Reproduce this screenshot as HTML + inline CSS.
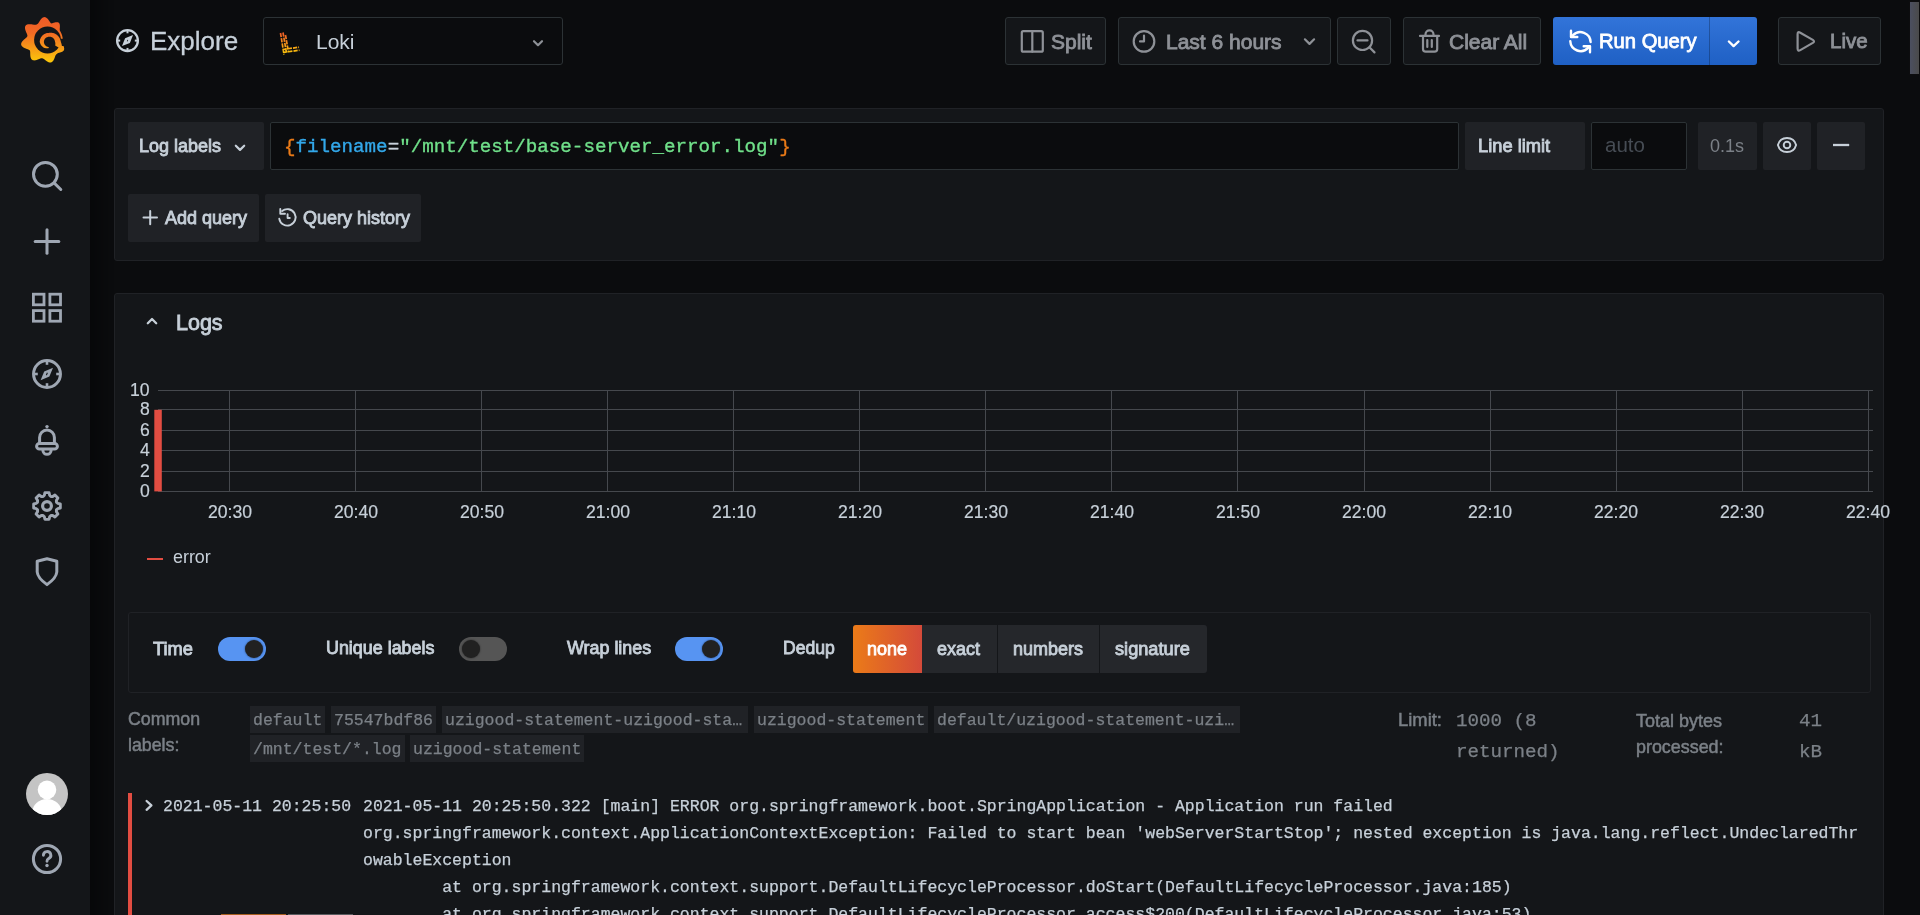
<!DOCTYPE html><html><head><meta charset="utf-8"><style>
*{margin:0;padding:0;box-sizing:border-box}
html,body{width:1920px;height:915px;overflow:hidden;background:#0b0c0e;font-family:"Liberation Sans", sans-serif;color:#c7d0d9}
.a{position:absolute}
.t{position:absolute;white-space:pre;line-height:1}
.m{font-family:"Liberation Mono", monospace}
.med{-webkit-text-stroke:0.85px currentColor}
.m{-webkit-text-stroke:0.25px currentColor}
body>*{will-change:transform}
svg{position:absolute;overflow:visible}
</style></head><body><div class="a" style="left:0;top:0;width:90px;height:915px;background:#141619"></div>
<div class="a" style="left:90px;top:0;width:24px;height:915px;background:linear-gradient(to right,rgba(0,0,0,0.35),rgba(0,0,0,0))"></div>
<svg class="a" style="left:0;top:0" width="90" height="90" viewBox="0 0 90 90">
<defs><linearGradient id="lg" x1="0" y1="17" x2="0" y2="63" gradientUnits="userSpaceOnUse"><stop offset="0" stop-color="#f05a28"/><stop offset="0.35" stop-color="#f26a24"/><stop offset="1" stop-color="#fbca0a"/></linearGradient></defs>
<path d="M44.80,17.13 L45.00,17.16 L45.21,17.21 L45.41,17.27 L45.61,17.35 L45.81,17.43 L46.00,17.53 L46.20,17.64 L46.39,17.76 L46.58,17.89 L46.77,18.03 L46.95,18.18 L47.13,18.33 L47.31,18.49 L47.48,18.66 L47.65,18.84 L47.82,19.02 L47.98,19.20 L48.14,19.39 L48.30,19.59 L48.45,19.78 L48.60,19.98 L48.75,20.18 L48.89,20.38 L49.03,20.58 L49.17,20.78 L49.31,20.98 L49.44,21.18 L49.57,21.38 L49.70,21.57 L49.82,21.76 L49.94,21.95 L50.07,22.13 L50.19,22.31 L50.31,22.48 L50.43,22.65 L50.55,22.81 L50.67,22.96 L50.79,23.10 L50.91,23.24 L51.04,23.37 L51.17,23.45 L51.35,23.43 L51.53,23.41 L51.72,23.37 L51.92,23.32 L52.11,23.27 L52.32,23.21 L52.53,23.15 L52.74,23.08 L52.95,23.01 L53.18,22.94 L53.40,22.87 L53.63,22.79 L53.86,22.72 L54.09,22.65 L54.33,22.58 L54.57,22.51 L54.81,22.44 L55.05,22.38 L55.29,22.33 L55.53,22.28 L55.77,22.24 L56.01,22.20 L56.25,22.18 L56.49,22.16 L56.72,22.15 L56.95,22.15 L57.17,22.16 L57.39,22.18 L57.60,22.22 L57.81,22.26 L58.01,22.32 L58.20,22.39 L58.38,22.48 L58.55,22.58 L58.71,22.69 L58.86,22.82 L59.00,22.96 L59.13,23.12 L59.24,23.29 L59.35,23.47 L59.44,23.65 L59.53,23.85 L59.60,24.06 L59.67,24.28 L59.72,24.50 L59.77,24.72 L59.81,24.96 L59.84,25.19 L59.86,25.44 L59.88,25.68 L59.89,25.93 L59.90,26.17 L59.90,26.42 L59.89,26.67 L59.89,26.92 L59.87,27.16 L59.86,27.41 L59.85,27.65 L59.83,27.89 L59.81,28.12 L59.80,28.36 L59.78,28.58 L59.77,28.81 L59.76,29.02 L59.75,29.23 L59.75,29.44 L59.75,29.64 L59.76,29.83 L59.77,30.02 L59.80,30.19 L59.83,30.36 L59.87,30.52 L59.92,30.68 L59.99,30.82 L60.06,30.96 L60.15,31.10 L60.23,31.23 L60.31,31.36 L60.39,31.50 L60.47,31.64 L60.54,31.77 L60.62,31.91 L60.69,32.05 L60.77,32.19 L60.84,32.33 L60.91,32.47 L60.98,32.61 L61.05,32.75 L61.11,32.89 L61.18,33.04 L61.24,33.18 L61.31,33.32 L61.37,33.47 L61.43,33.61 L61.49,33.76 L61.55,33.90 L61.60,34.05 L61.66,34.20 L61.71,34.34 L61.77,34.49 L61.82,34.64 L61.87,34.79 L61.92,34.94 L61.97,35.09 L62.01,35.24 L62.06,35.39 L62.10,35.54 L62.15,35.69 L62.19,35.84 L62.23,35.99 L62.27,36.15 L62.30,36.30 L62.34,36.45 L62.37,36.60 L62.41,36.76 L62.44,36.91 L62.47,37.07 L62.50,37.22 L62.53,37.37 L62.55,37.53 L62.58,37.68 L62.60,37.84 L62.62,37.99 L62.65,38.15 L62.67,38.31 L62.68,38.46 L62.70,38.62 L62.72,38.77 L62.73,38.93 L62.74,39.09 L62.76,39.24 L62.77,39.40 L62.78,39.56 L62.78,39.71 L62.79,39.87 L62.79,40.03 L62.80,40.19 L62.80,40.34 L62.80,40.50 L62.80,40.66 L62.80,40.81 L62.79,40.97 L62.79,41.13 L62.78,41.29 L62.78,41.44 L62.77,41.60 L62.76,41.76 L62.74,41.91 L62.73,42.07 L62.72,42.23 L62.70,42.38 L62.68,42.54 L62.67,42.69 L62.65,42.85 L62.65,43.01 L62.66,43.17 L62.67,43.33 L62.70,43.49 L62.73,43.66 L62.77,43.83 L62.82,44.00 L62.87,44.18 L62.93,44.35 L62.99,44.53 L63.05,44.71 L63.12,44.90 L63.19,45.09 L63.27,45.28 L63.34,45.47 L63.42,45.66 L63.49,45.86 L63.57,46.06 L63.64,46.26 L63.71,46.46 L63.78,46.67 L63.84,46.87 L63.90,47.08 L63.96,47.28 L64.01,47.49 L64.05,47.70 L64.09,47.91 L64.12,48.11 L64.15,48.32 L64.17,48.52 L64.17,48.72 L64.17,48.92 L64.16,49.12 L64.14,49.31 L64.11,49.50 L64.07,49.69 L64.01,49.87 L63.95,50.05 L63.87,50.22 L63.78,50.38 L63.67,50.54 L63.56,50.69 L63.43,50.83 L63.30,50.97 L63.15,51.10 L63.00,51.22 L62.84,51.34 L62.67,51.45 L62.50,51.56 L62.32,51.66 L62.13,51.76 L61.94,51.85 L61.75,51.93 L61.55,52.01 L61.35,52.09 L61.15,52.16 L60.94,52.23 L60.74,52.29 L60.53,52.36 L60.33,52.42 L60.12,52.47 L59.92,52.53 L59.72,52.58 L59.52,52.63 L59.32,52.69 L59.13,52.74 L58.94,52.79 L58.75,52.84 L58.57,52.90 L58.39,52.96 L58.22,53.02 L58.06,53.08 L57.90,53.15 L57.74,53.22 L57.60,53.30 L57.45,53.38 L57.32,53.47 L57.19,53.56 L57.08,53.66 L56.96,53.77 L56.84,53.88 L56.73,53.98 L56.61,54.08 L56.49,54.19 L56.37,54.29 L56.25,54.39 L56.14,54.51 L56.04,54.63 L55.94,54.76 L55.85,54.90 L55.76,55.04 L55.67,55.19 L55.59,55.35 L55.51,55.51 L55.43,55.69 L55.36,55.86 L55.28,56.04 L55.21,56.23 L55.14,56.42 L55.07,56.62 L55.00,56.82 L54.93,57.02 L54.85,57.23 L54.78,57.44 L54.70,57.65 L54.63,57.87 L54.55,58.08 L54.46,58.30 L54.38,58.51 L54.29,58.73 L54.20,58.94 L54.10,59.16 L54.00,59.37 L53.90,59.58 L53.79,59.79 L53.68,59.99 L53.57,60.19 L53.45,60.39 L53.32,60.58 L53.19,60.76 L53.06,60.94 L52.92,61.12 L52.78,61.28 L52.63,61.44 L52.48,61.59 L52.32,61.73 L52.16,61.86 L51.99,61.98 L51.82,62.09 L51.64,62.19 L51.46,62.28 L51.27,62.36 L51.08,62.42 L50.89,62.46 L50.69,62.50 L50.50,62.52 L50.29,62.53 L50.09,62.53 L49.88,62.51 L49.67,62.49 L49.47,62.45 L49.26,62.41 L49.05,62.35 L48.84,62.29 L48.63,62.22 L48.42,62.13 L48.21,62.04 L48.01,61.95 L47.80,61.85 L47.60,61.74 L47.39,61.62 L47.19,61.50 L46.99,61.38 L46.80,61.25 L46.60,61.12 L46.41,60.99 L46.22,60.85 L46.04,60.71 L45.85,60.57 L45.67,60.43 L45.49,60.29 L45.31,60.15 L45.14,60.02 L44.97,59.88 L44.80,59.74 L44.63,59.61 L44.47,59.48 L44.31,59.36 L44.15,59.24 L43.99,59.12 L43.83,59.01 L43.67,58.91 L43.52,58.81 L43.37,58.72 L43.21,58.64 L43.06,58.56 L42.91,58.50 L42.76,58.44 L42.60,58.39 L42.45,58.35 L42.29,58.32 L42.14,58.30 L41.98,58.28 L41.83,58.26 L41.67,58.25 L41.51,58.25 L41.35,58.27 L41.18,58.29 L41.01,58.32 L40.84,58.36 L40.67,58.41 L40.49,58.46 L40.31,58.52 L40.12,58.59 L39.94,58.66 L39.74,58.73 L39.55,58.81 L39.35,58.89 L39.15,58.98 L38.95,59.07 L38.74,59.15 L38.53,59.24 L38.32,59.33 L38.10,59.42 L37.88,59.51 L37.66,59.60 L37.44,59.69 L37.21,59.77 L36.98,59.85 L36.75,59.93 L36.52,60.00 L36.29,60.07 L36.06,60.13 L35.83,60.19 L35.60,60.24 L35.36,60.28 L35.13,60.32 L34.90,60.35 L34.67,60.37 L34.45,60.39 L34.22,60.39 L34.00,60.39 L33.78,60.37 L33.57,60.35 L33.36,60.32 L33.15,60.27 L32.95,60.21 L32.76,60.15 L32.57,60.07 L32.39,59.98 L32.22,59.87 L32.05,59.76 L31.90,59.63 L31.75,59.49 L31.61,59.34 L31.48,59.18 L31.35,59.01 L31.23,58.83 L31.13,58.65 L31.02,58.45 L30.93,58.25 L30.84,58.05 L30.76,57.83 L30.69,57.61 L30.63,57.39 L30.57,57.17 L30.51,56.94 L30.46,56.70 L30.42,56.47 L30.39,56.23 L30.35,55.99 L30.33,55.75 L30.30,55.51 L30.28,55.27 L30.27,55.03 L30.26,54.79 L30.25,54.55 L30.24,54.32 L30.23,54.08 L30.23,53.85 L30.22,53.62 L30.22,53.40 L30.22,53.18 L30.21,52.96 L30.21,52.74 L30.20,52.53 L30.19,52.33 L30.18,52.13 L30.17,51.93 L30.15,51.74 L30.12,51.56 L30.09,51.38 L30.06,51.21 L30.02,51.04 L29.97,50.88 L29.92,50.73 L29.86,50.58 L29.78,50.44 L29.68,50.32 L29.56,50.21 L29.44,50.10 L29.30,50.00 L29.15,49.90 L28.99,49.81 L28.83,49.72 L28.65,49.64 L28.47,49.55 L28.28,49.47 L28.08,49.39 L27.87,49.31 L27.66,49.23 L27.45,49.15 L27.22,49.07 L27.00,48.99 L26.77,48.91 L26.53,48.83 L26.29,48.74 L26.05,48.65 L25.81,48.56 L25.57,48.46 L25.33,48.37 L25.09,48.27 L24.85,48.16 L24.61,48.05 L24.37,47.94 L24.13,47.82 L23.90,47.70 L23.68,47.57 L23.45,47.44 L23.24,47.30 L23.03,47.16 L22.83,47.01 L22.63,46.86 L22.44,46.70 L22.27,46.54 L22.10,46.37 L21.94,46.20 L21.80,46.02 L21.67,45.84 L21.55,45.66 L21.44,45.47 L21.35,45.27 L21.27,45.07 L21.21,44.87 L21.16,44.67 L21.14,44.46 L21.13,44.25 L21.13,44.04 L21.15,43.82 L21.19,43.61 L21.23,43.39 L21.30,43.18 L21.37,42.96 L21.46,42.75 L21.56,42.53 L21.67,42.32 L21.79,42.11 L21.92,41.90 L22.06,41.69 L22.21,41.49 L22.37,41.28 L22.53,41.08 L22.70,40.89 L22.88,40.69 L23.06,40.50 L23.24,40.31 L23.43,40.13 L23.62,39.95 L23.81,39.77 L24.01,39.59 L24.20,39.42 L24.40,39.25 L24.59,39.09 L24.79,38.92 L24.98,38.77 L25.17,38.61 L25.35,38.46 L25.53,38.30 L25.71,38.16 L25.88,38.01 L26.05,37.86 L26.21,37.72 L26.36,37.58 L26.50,37.44 L26.64,37.30 L26.76,37.16 L26.88,37.02 L26.98,36.88 L27.08,36.73 L27.16,36.59 L27.23,36.44 L27.29,36.30 L27.33,36.15 L27.37,35.99 L27.38,35.83 L27.39,35.67 L27.38,35.50 L27.36,35.33 L27.33,35.16 L27.29,34.98 L27.24,34.79 L27.18,34.60 L27.11,34.41 L27.04,34.21 L26.96,34.01 L26.88,33.80 L26.79,33.59 L26.69,33.37 L26.60,33.15 L26.50,32.92 L26.40,32.69 L26.29,32.45 L26.19,32.21 L26.09,31.97 L25.99,31.73 L25.89,31.48 L25.79,31.23 L25.70,30.98 L25.61,30.72 L25.52,30.46 L25.44,30.20 L25.36,29.95 L25.29,29.69 L25.23,29.43 L25.17,29.17 L25.12,28.91 L25.08,28.65 L25.05,28.40 L25.03,28.14 L25.01,27.90 L25.01,27.65 L25.02,27.41 L25.04,27.17 L25.07,26.94 L25.12,26.72 L25.17,26.50 L25.24,26.29 L25.32,26.09 L25.42,25.90 L25.53,25.71 L25.65,25.54 L25.79,25.38 L25.94,25.23 L26.10,25.09 L26.28,24.96 L26.47,24.84 L26.66,24.74 L26.87,24.64 L27.09,24.55 L27.31,24.48 L27.54,24.41 L27.78,24.35 L28.03,24.30 L28.28,24.26 L28.53,24.23 L28.79,24.21 L29.05,24.19 L29.32,24.19 L29.59,24.19 L29.86,24.19 L30.13,24.20 L30.40,24.22 L30.67,24.24 L30.94,24.27 L31.21,24.30 L31.47,24.33 L31.74,24.37 L32.00,24.41 L32.26,24.45 L32.52,24.49 L32.77,24.53 L33.02,24.57 L33.26,24.62 L33.50,24.66 L33.73,24.69 L33.96,24.73 L34.18,24.76 L34.40,24.79 L34.61,24.81 L34.82,24.83 L35.01,24.84 L35.21,24.84 L35.39,24.84 L35.57,24.83 L35.74,24.80 L35.90,24.77 L36.06,24.73 L36.21,24.67 L36.35,24.61 L36.49,24.53 L36.63,24.46 L36.77,24.39 L36.91,24.32 L37.05,24.25 L37.19,24.19 L37.33,24.11 L37.47,24.03 L37.60,23.94 L37.73,23.83 L37.85,23.72 L37.97,23.60 L38.09,23.46 L38.21,23.32 L38.32,23.17 L38.44,23.02 L38.55,22.85 L38.67,22.68 L38.78,22.51 L38.89,22.33 L39.01,22.14 L39.13,21.95 L39.25,21.75 L39.37,21.55 L39.49,21.35 L39.62,21.15 L39.74,20.95 L39.87,20.74 L40.01,20.54 L40.14,20.33 L40.28,20.13 L40.43,19.92 L40.57,19.72 L40.72,19.52 L40.88,19.33 L41.03,19.14 L41.19,18.95 L41.36,18.77 L41.53,18.60 L41.70,18.43 L41.87,18.27 L42.05,18.11 L42.23,17.97 L42.42,17.83 L42.60,17.70 L42.80,17.59 L42.99,17.48 L43.18,17.39 L43.38,17.31 L43.58,17.24 L43.78,17.18 L43.98,17.14 L44.19,17.11 L44.39,17.10 L44.60,17.11Z" fill="url(#lg)"/>
<circle cx="47.5" cy="40" r="13.4" fill="#141619"/>
<path d="M59.8,38.8 L70,38.8 L70,46 L61.5,46 Z" fill="#141619"/>
<path d="M48.65,48.08 L48.19,48.19 L47.71,48.27 L47.21,48.31 L46.70,48.32 L46.18,48.28 L45.65,48.20 L45.12,48.08 L44.59,47.92 L44.06,47.71 L43.54,47.46 L43.06,47.14 L42.60,46.78 L42.16,46.37 L41.74,45.94 L41.35,45.46 L40.98,44.95 L40.66,44.41 L40.37,43.84 L40.11,43.24 L39.90,42.61 L39.73,41.97 L39.73,41.30 L39.82,40.65 L39.95,40.00 L40.12,39.37 L40.34,38.75 L40.60,38.15 L40.90,37.57 L41.23,37.01 L41.61,36.48 L42.02,35.99 L42.46,35.52 L42.93,35.08 L43.44,34.68 L43.96,34.32 L44.51,33.99 L45.08,33.71 L45.66,33.47 L46.26,33.27 L46.87,33.11 L47.49,32.99 L48.11,32.92 L48.73,32.89 L49.36,32.87 L49.99,32.78 L50.63,32.74 L51.29,32.75 L51.95,32.80 L52.62,32.90 L53.28,33.05 L53.94,33.25 L54.59,33.51 L55.22,33.81 L55.85,34.15 L56.45,34.55 L57.03,35.00 L57.58,35.49 L58.10,36.02 L58.58,36.60 L59.03,37.21 L59.44,37.87 L59.81,38.56 L60.12,39.28 L60.39,40.03 L60.61,40.80 L60.77,41.60 L61.06,42.42 L61.34,43.29 L61.57,44.20 L61.72,45.15 L61.80,46.14 L61.80,47.15 L61.72,48.18 L61.55,49.22 L55.17,45.39 L55.27,44.89 L55.33,44.40 L55.36,43.92 L55.35,43.45 L55.30,42.99 L55.22,42.54 L55.10,42.11 L54.99,41.70 L54.93,41.30 L54.85,40.91 L54.74,40.52 L54.60,40.15 L54.44,39.79 L54.26,39.44 L54.05,39.11 L53.82,38.80 L53.57,38.51 L53.30,38.23 L53.02,37.98 L52.72,37.75 L52.41,37.54 L52.08,37.36 L51.75,37.20 L51.41,37.07 L51.06,36.96 L50.71,36.87 L50.35,36.82 L49.99,36.78 L49.64,36.77 L49.29,36.79 L48.94,36.80 L48.59,36.81 L48.24,36.86 L47.89,36.92 L47.55,37.01 L47.22,37.13 L46.89,37.26 L46.57,37.43 L46.27,37.61 L45.97,37.81 L45.69,38.04 L45.43,38.28 L45.18,38.55 L44.95,38.83 L44.75,39.12 L44.56,39.43 L44.39,39.76 L44.25,40.10 L44.13,40.44 L44.03,40.80 L43.96,41.16 L43.92,41.52 L43.90,41.89 L43.92,42.26 L43.97,42.63 L44.04,42.99 L44.13,43.35 L44.25,43.70 L44.40,44.04 L44.56,44.37 L44.76,44.69 L44.97,44.99 L45.20,45.28 L45.45,45.55 L45.72,45.80 L46.01,46.03 L46.31,46.24 L46.63,46.44 L46.96,46.60 L47.30,46.75 L47.65,46.87 L48.01,46.96 L48.37,47.03 L48.74,47.08Z" fill="url(#lg)"/>
</svg>
<svg style="left:0;top:0" width="90" height="915"><g fill="none" stroke="#9fa7b3" stroke-width="3" stroke-linecap="round" stroke-linejoin="round"><circle cx="45.4" cy="174.3" r="11.9"/><line x1="54.3" y1="183.2" x2="60.8" y2="189.5"/><line x1="35.2" y1="241.5" x2="58.8" y2="241.5"/><line x1="47" y1="229.7" x2="47" y2="253.3"/><rect x="33.4" y="294.2" width="10.6" height="10.6" stroke-width="2.8" stroke-linejoin="miter"/><rect x="33.4" y="310.6" width="10.6" height="10.6" stroke-width="2.8" stroke-linejoin="miter"/><rect x="49.9" y="294.2" width="10.6" height="10.6" stroke-width="2.8" stroke-linejoin="miter"/><rect x="49.9" y="310.6" width="10.6" height="10.6" stroke-width="2.8" stroke-linejoin="miter"/><circle cx="47" cy="374" r="13.45"/><line x1="47" y1="360.6" x2="47" y2="364.8" stroke-width="2.6" stroke-linecap="butt"/><line x1="47" y1="383.2" x2="47" y2="387.4" stroke-width="2.6" stroke-linecap="butt"/><line x1="33.6" y1="374" x2="37.8" y2="374" stroke-width="2.6" stroke-linecap="butt"/><line x1="56.2" y1="374" x2="60.4" y2="374" stroke-width="2.6" stroke-linecap="butt"/><path d="M39.6,443 L39.6,437.5 A7.4,7.4 0 0 1 54.4,437.5 L54.4,443"/><rect x="36.6" y="443.4" width="20.8" height="5.6" rx="2.8"/><path d="M42.9,450.2 A4.1,4.1 0 0 0 51.1,450.2"/><path d="M47,558.7 L56.8,561.2 L56.8,572 Q56.3,578 47,584.6 Q37.7,578 37.2,572 L37.2,561.2 Z"/><path d="M43.10,496.58 L44.34,495.33 L44.89,492.67 L49.11,492.67 L49.66,495.33 L50.90,496.58 L52.67,496.57 L54.94,495.08 L57.92,498.06 L56.43,500.33 L56.42,502.10 L57.67,503.34 L60.33,503.89 L60.33,508.11 L57.67,508.66 L56.42,509.90 L56.43,511.67 L57.92,513.94 L54.94,516.92 L52.67,515.43 L50.90,515.42 L49.66,516.67 L49.11,519.33 L44.89,519.33 L44.34,516.67 L43.10,515.42 L41.33,515.43 L39.06,516.92 L36.08,513.94 L37.57,511.67 L37.58,509.90 L36.33,508.66 L33.67,508.11 L33.67,503.89 L36.33,503.34 L37.58,502.10 L37.57,500.33 L36.08,498.06 L39.06,495.08 L41.33,496.57Z" stroke-width="2.9"/><circle cx="47" cy="506" r="4.4" stroke-width="3.2"/></g><path d="M53,367.8 L49.4,376.6 L40.6,380.2 L44.2,371.4 Z" fill="#9fa7b3"/><path d="M47.9,373.1 L46.8,375.4 L45.9,374.7 L46.9,372.6Z" fill="#141619"/><circle cx="47" cy="426.6" r="1.7" fill="#9fa7b3"/></svg>
<svg style="left:0;top:0" width="90" height="915"><defs><clipPath id="av"><circle cx="47" cy="794" r="21"/></clipPath></defs><circle cx="47" cy="794" r="21" fill="#c4c4c4"/><g clip-path="url(#av)" fill="#fff"><circle cx="47" cy="789.8" r="9.3"/><ellipse cx="47" cy="812" rx="14.5" ry="13"/></g><circle cx="47" cy="859" r="13.6" fill="none" stroke="#9fa7b3" stroke-width="3"/><path d="M43.4,855.3 A3.7,3.7 0 1 1 48.6,858.6 Q47,859.5 47,861.3" fill="none" stroke="#9fa7b3" stroke-width="2.9" stroke-linecap="round"/><circle cx="47" cy="865.5" r="1.7" fill="#9fa7b3"/></svg>
<svg style="left:0;top:0" width="300" height="90"><g fill="none" stroke="#c7d0d9" stroke-width="2.2"><circle cx="127.5" cy="40.6" r="10.4" stroke-width="2.3"/><line x1="127.5" y1="30.5" x2="127.5" y2="33.3" stroke-width="2"/><line x1="127.5" y1="47.9" x2="127.5" y2="50.7" stroke-width="2"/><line x1="117.4" y1="40.6" x2="120.2" y2="40.6" stroke-width="2"/><line x1="134.8" y1="40.6" x2="137.6" y2="40.6" stroke-width="2"/></g><path d="M133,35.1 L129.9,43 L122,46.1 L125.1,38.2 Z" fill="#c7d0d9"/><path d="M128.2,39.9 L127.5,41.5 L126.8,41.3 L127.5,39.7Z" fill="#0b0c0e"/></svg>
<div class="t " style="left:150.00px;top:28.29px;font-size:26px;color:#c7d0d9;-webkit-text-stroke:0.3px currentColor">Explore</div>
<div class="a" style="left:263px;top:17px;width:300px;height:48px;background:#0b0c0e;border:1px solid #2c3235;border-radius:3px;"></div>
<svg style="left:0;top:0" width="600" height="90"><defs><linearGradient id="lk" x1="0" y1="0" x2="0" y2="1"><stop offset="0" stop-color="#f05a28"/><stop offset="1" stop-color="#fbca0a"/></linearGradient></defs><g stroke="url(#lk)" stroke-width="1.7" fill="none" stroke-dasharray="4.2 1.1"><path d="M280.5,33 L284,54.5 M283,32.5 L286.5,53 M285.5,35 L288.5,52.5 M282.5,49.5 L299,47.2 M283,52.5 L299.5,50.2"/></g></svg>
<div class="t " style="left:315.60px;top:31.42px;font-size:21px;color:#c7d0d9;">Loki</div>
<svg style="left:0;top:0" width="600" height="90"><path d="M534,41.2 L538,45.2 L542,41.2" fill="none" stroke="#8e9197" stroke-width="2.2" stroke-linecap="round" stroke-linejoin="round"/></svg>
<div class="a" style="left:1005px;top:17px;width:101px;height:48px;background:#141619;border:1px solid #2c3235;border-radius:3px;"></div>
<div class="a" style="left:1118px;top:17px;width:213px;height:48px;background:#141619;border:1px solid #2c3235;border-radius:3px;"></div>
<div class="a" style="left:1337px;top:17px;width:54px;height:48px;background:#141619;border:1px solid #2c3235;border-radius:3px;"></div>
<div class="a" style="left:1403px;top:17px;width:138px;height:48px;background:#141619;border:1px solid #2c3235;border-radius:3px;"></div>
<div class="a" style="left:1778px;top:17px;width:103px;height:48px;background:#141619;border:1px solid #2c3235;border-radius:3px;"></div>
<div class="t med" style="left:1051.00px;top:30.72px;font-size:21px;color:#8e9197;">Split</div>
<div class="t med" style="left:1165.60px;top:30.72px;font-size:21px;color:#8e9197;">Last 6 hours</div>
<div class="t med" style="left:1448.90px;top:30.72px;font-size:21px;color:#8e9197;">Clear All</div>
<div class="t med" style="left:1829.80px;top:31.15px;font-size:20.5px;color:#8e9197;">Live</div>
<div class="a" style="left:1553px;top:17px;width:204px;height:48px;border-radius:3px;background:linear-gradient(to bottom,#3274d9,#1f60c4)"></div>
<div class="a" style="left:1709px;top:17px;width:1px;height:48px;background:rgba(0,0,0,0.25)"></div>
<div class="t med" style="left:1598.70px;top:31.40px;font-size:20.2px;color:#ffffff;-webkit-text-stroke:0.8px #fff">Run Query</div>
<svg style="left:0;top:0" width="1920" height="90"><g fill="none" stroke="#8e9197" stroke-width="2.2" stroke-linecap="round" stroke-linejoin="round"><rect x="1021.8" y="31.2" width="21" height="20.5" rx="1.5"/><line x1="1032.3" y1="31.2" x2="1032.3" y2="51.7"/><circle cx="1144" cy="41.4" r="10.3"/><path d="M1144,35.5 L1144,41.4 L1140,41.4"/><path d="M1304.9,39.3 L1309.5,43.9 L1314.1,39.3"/><circle cx="1362.5" cy="40.4" r="9.6"/><line x1="1357.5" y1="40.4" x2="1367.5" y2="40.4"/><line x1="1369.4" y1="47.3" x2="1374.5" y2="52.4"/><path d="M1420,35.9 L1439,35.9 M1425.5,35.9 L1425.5,34.3 A4,4 0 0 1 1433.5,34.3 L1433.5,35.9 M1423,36 L1423,49 Q1423,51.7 1425.7,51.7 L1434.5,51.7 Q1437.2,51.7 1437.2,49 L1437.2,36 M1427.3,40 L1427.3,47 M1431.8,40 L1431.8,47"/><path d="M1797.6,34.2 Q1797.6,31.2 1800.3,32.7 L1812.8,39.9 Q1815.2,41.4 1812.8,42.9 L1800.3,50.1 Q1797.6,51.6 1797.6,48.6 Z"/></g><g fill="none" stroke="#fff" stroke-width="2.4" stroke-linecap="round" stroke-linejoin="round"><path d="M1573,35.2 A10.3,10.3 0 0 1 1590.6,42"/><path d="M1571,30.8 L1571,37 L1577.3,37"/><path d="M1570.3,41.3 A10.3,10.3 0 0 0 1588.3,47.6"/><path d="M1583.7,46.2 L1590,46.2 L1590,52.2"/><path d="M1728.9,41.5 L1733.6,46.1 L1738.5,41.5"/></g></svg>
<div class="a" style="left:1908.5px;top:0.5px;width:11px;height:74px;background:linear-gradient(to right,#4b4f60,#4a4a4a);border:1px solid #0d0d0f"></div>
<div class="a" style="left:114px;top:108px;width:1770px;height:153px;background:#141619;border:1px solid #202226;border-radius:3px;"></div>
<div class="a" style="left:128px;top:122px;width:136px;height:48px;background:#202226;border-radius:2px;"></div>
<div class="t med" style="left:139.40px;top:136.76px;font-size:18px;color:#c7d0d9;">Log labels</div>
<div class="a" style="left:270px;top:122px;width:1189px;height:48px;background:#0b0c0e;border:1px solid #2c3235;border-radius:2px;"></div>
<div class="t  m" style="left:283.50px;top:137.78px;font-size:19.2px;color:#c7d0d9;-webkit-text-stroke:0.35px currentColor"><span style="color:#eb7b18">{</span><span style="color:#33a8ea">filename</span><span style="color:#c7d0d9">=</span><span style="color:#70e08a">"/mnt/test/base-server_error.log"</span><span style="color:#eb7b18">}</span></div>
<div class="a" style="left:1465px;top:122px;width:120px;height:48px;background:#202226;border-radius:2px;"></div>
<div class="t med" style="left:1477.60px;top:136.91px;font-size:18.3px;color:#c7d0d9;">Line limit</div>
<div class="a" style="left:1591px;top:122px;width:96px;height:48px;background:#0b0c0e;border:1px solid #2c3235;border-radius:2px;"></div>
<div class="t " style="left:1605.00px;top:135.05px;font-size:20.5px;color:#464c54;">auto</div>
<div class="a" style="left:1698px;top:122px;width:59px;height:48px;background:#202226;border-radius:2px;"></div>
<div class="t " style="left:1710.00px;top:137.16px;font-size:18px;color:#7b8087;">0.1s</div>
<div class="a" style="left:1763px;top:122px;width:48px;height:48px;background:#202226;border-radius:2px;"></div>
<div class="a" style="left:1817px;top:122px;width:48px;height:48px;background:#202226;border-radius:2px;"></div>
<svg style="left:0;top:0" width="1920" height="270"><g fill="none" stroke="#c7d0d9" stroke-width="2.2" stroke-linecap="round" stroke-linejoin="round"><path d="M1777.9,145 C1780.5,135.6 1793.5,135.6 1796.1,145 C1793.5,154.4 1780.5,154.4 1777.9,145 Z" stroke-width="1.9"/><circle cx="1787" cy="145" r="3.3" stroke-width="1.9"/><line x1="1833" y1="145" x2="1849.2" y2="145" stroke-linecap="butt" stroke-width="2.3"/></g></svg>
<div class="a" style="left:128px;top:194px;width:131px;height:48px;background:#202226;border-radius:2px;"></div>
<div class="a" style="left:265px;top:194px;width:156px;height:48px;background:#202226;border-radius:2px;"></div>
<div class="t med" style="left:165.40px;top:209.16px;font-size:18px;color:#c7d0d9;">Add query</div>
<div class="t med" style="left:302.50px;top:209.16px;font-size:18px;color:#c7d0d9;">Query history</div>
<svg style="left:0;top:0" width="600" height="270"><g fill="none" stroke="#c7d0d9" stroke-width="2" stroke-linecap="round" stroke-linejoin="round"><line x1="143.5" y1="217.6" x2="157" y2="217.6"/><line x1="150.2" y1="210.9" x2="150.2" y2="224.3"/><path d="M282.1,211.1 A8.2,8.2 0 1 1 279.3,218.8" stroke-width="1.9"/><path d="M280.3,209 L280.3,213.8 L285,213.8" stroke-width="1.9"/><path d="M287.6,214.3 L287.6,218 L289.8,218" stroke-width="1.9"/><path d="M235.8,145.7 L240,149.9 L244.2,145.7" stroke-width="2.2"/></g></svg>
<div class="a" style="left:114px;top:293px;width:1770px;height:647px;background:#141619;border:1px solid #202226;border-radius:3px;"></div>
<svg style="left:0;top:0" width="600" height="400"><path d="M147.8,323.2 L152,319 L156.2,323.2" fill="none" stroke="#c7d0d9" stroke-width="2.3" stroke-linecap="round" stroke-linejoin="round"/></svg>
<div class="t med" style="left:176.00px;top:312.50px;font-size:21.5px;color:#c7d0d9;">Logs</div>
<svg style="left:0;top:0" width="1920" height="600"><g stroke="#45484d" stroke-width="1" shape-rendering="crispEdges"><line x1="158" y1="390.5" x2="1873" y2="390.5"/><line x1="158" y1="409.5" x2="1873" y2="409.5"/><line x1="158" y1="430.5" x2="1873" y2="430.5"/><line x1="158" y1="450.5" x2="1873" y2="450.5"/><line x1="158" y1="471.5" x2="1873" y2="471.5"/><line x1="158" y1="491.5" x2="1873" y2="491.5"/><line x1="229.5" y1="390" x2="229.5" y2="492"/><line x1="355.6" y1="390" x2="355.6" y2="492"/><line x1="481.6" y1="390" x2="481.6" y2="492"/><line x1="607.6" y1="390" x2="607.6" y2="492"/><line x1="733.7" y1="390" x2="733.7" y2="492"/><line x1="859.8" y1="390" x2="859.8" y2="492"/><line x1="985.8" y1="390" x2="985.8" y2="492"/><line x1="1111.8" y1="390" x2="1111.8" y2="492"/><line x1="1237.9" y1="390" x2="1237.9" y2="492"/><line x1="1364.0" y1="390" x2="1364.0" y2="492"/><line x1="1490.0" y1="390" x2="1490.0" y2="492"/><line x1="1616.0" y1="390" x2="1616.0" y2="492"/><line x1="1742.1" y1="390" x2="1742.1" y2="492"/><line x1="1868.1" y1="390" x2="1868.1" y2="492"/></g><rect x="154.3" y="409.8" width="7.5" height="81.6" fill="#e24d42"/></svg>
<div class="t " style="left:139.70px;top:482.50px;font-size:17.6px;color:#c7d0d9;-webkit-text-stroke:0.2px currentColor">0</div>
<div class="t " style="left:139.70px;top:462.50px;font-size:17.6px;color:#c7d0d9;-webkit-text-stroke:0.2px currentColor">2</div>
<div class="t " style="left:139.70px;top:441.50px;font-size:17.6px;color:#c7d0d9;-webkit-text-stroke:0.2px currentColor">4</div>
<div class="t " style="left:139.70px;top:421.50px;font-size:17.6px;color:#c7d0d9;-webkit-text-stroke:0.2px currentColor">6</div>
<div class="t " style="left:139.70px;top:400.50px;font-size:17.6px;color:#c7d0d9;-webkit-text-stroke:0.2px currentColor">8</div>
<div class="t " style="left:129.90px;top:381.50px;font-size:17.6px;color:#c7d0d9;-webkit-text-stroke:0.2px currentColor">10</div>
<div class="t " style="left:207.60px;top:504.10px;font-size:17.6px;color:#c7d0d9;-webkit-text-stroke:0.2px currentColor">20:30</div>
<div class="t " style="left:333.65px;top:504.10px;font-size:17.6px;color:#c7d0d9;-webkit-text-stroke:0.2px currentColor">20:40</div>
<div class="t " style="left:459.70px;top:504.10px;font-size:17.6px;color:#c7d0d9;-webkit-text-stroke:0.2px currentColor">20:50</div>
<div class="t " style="left:585.75px;top:504.10px;font-size:17.6px;color:#c7d0d9;-webkit-text-stroke:0.2px currentColor">21:00</div>
<div class="t " style="left:711.80px;top:504.10px;font-size:17.6px;color:#c7d0d9;-webkit-text-stroke:0.2px currentColor">21:10</div>
<div class="t " style="left:837.85px;top:504.10px;font-size:17.6px;color:#c7d0d9;-webkit-text-stroke:0.2px currentColor">21:20</div>
<div class="t " style="left:963.90px;top:504.10px;font-size:17.6px;color:#c7d0d9;-webkit-text-stroke:0.2px currentColor">21:30</div>
<div class="t " style="left:1089.95px;top:504.10px;font-size:17.6px;color:#c7d0d9;-webkit-text-stroke:0.2px currentColor">21:40</div>
<div class="t " style="left:1216.00px;top:504.10px;font-size:17.6px;color:#c7d0d9;-webkit-text-stroke:0.2px currentColor">21:50</div>
<div class="t " style="left:1342.05px;top:504.10px;font-size:17.6px;color:#c7d0d9;-webkit-text-stroke:0.2px currentColor">22:00</div>
<div class="t " style="left:1468.10px;top:504.10px;font-size:17.6px;color:#c7d0d9;-webkit-text-stroke:0.2px currentColor">22:10</div>
<div class="t " style="left:1594.15px;top:504.10px;font-size:17.6px;color:#c7d0d9;-webkit-text-stroke:0.2px currentColor">22:20</div>
<div class="t " style="left:1720.20px;top:504.10px;font-size:17.6px;color:#c7d0d9;-webkit-text-stroke:0.2px currentColor">22:30</div>
<div class="t " style="left:1846.25px;top:504.10px;font-size:17.6px;color:#c7d0d9;-webkit-text-stroke:0.2px currentColor">22:40</div>
<div class="a" style="left:147px;top:557.5px;width:16px;height:2px;background:#e24d42"></div>
<div class="t " style="left:172.60px;top:548.65px;font-size:17.9px;color:#c7d0d9;">error</div>
<div class="a" style="left:128px;top:612px;width:1743px;height:81px;background:transparent;border:1px solid #202226;border-radius:3px;"></div>
<div class="t med" style="left:153.30px;top:639.61px;font-size:18.3px;color:#c7d0d9;">Time</div>
<div class="t med" style="left:326.00px;top:639.95px;font-size:17.9px;color:#c7d0d9;">Unique labels</div>
<div class="t med" style="left:566.60px;top:639.95px;font-size:17.9px;color:#c7d0d9;">Wrap lines</div>
<div class="t med" style="left:783.20px;top:640.20px;font-size:17.6px;color:#c7d0d9;">Dedup</div>
<div class="a" style="left:218px;top:637px;width:48px;height:24px;border-radius:12px;background:#5794f2"></div>
<div class="a" style="left:245px;top:640px;width:18px;height:18px;border-radius:9px;background:#212121;box-shadow:0 0 2px rgba(0,0,0,0.6)"></div>
<div class="a" style="left:459px;top:637px;width:48px;height:24px;border-radius:12px;background:#555555"></div>
<div class="a" style="left:462px;top:640px;width:18px;height:18px;border-radius:9px;background:#212121;box-shadow:0 0 2px rgba(0,0,0,0.6)"></div>
<div class="a" style="left:675px;top:637px;width:48px;height:24px;border-radius:12px;background:#5794f2"></div>
<div class="a" style="left:702px;top:640px;width:18px;height:18px;border-radius:9px;background:#212121;box-shadow:0 0 2px rgba(0,0,0,0.6)"></div>
<div class="a" style="left:853px;top:625px;width:354px;height:48px;border-radius:3px;background:#25272b"></div>
<div class="a" style="left:853px;top:625px;width:69px;height:48px;border-radius:3px 0 0 3px;background:linear-gradient(to right,#eb7b18,#d44a3a)"></div>
<div class="a" style="left:997px;top:625px;width:1px;height:48px;background:#141619"></div>
<div class="a" style="left:1099px;top:625px;width:1px;height:48px;background:#141619"></div>
<div class="t med" style="left:867.40px;top:639.86px;font-size:18px;color:#ffffff;">none</div>
<div class="t med" style="left:937.40px;top:639.86px;font-size:18px;color:#c7d0d9;">exact</div>
<div class="t med" style="left:1012.80px;top:639.86px;font-size:18px;color:#c7d0d9;">numbers</div>
<div class="t med" style="left:1115.30px;top:639.69px;font-size:18.2px;color:#c7d0d9;">signature</div>
<div class="t med" style="left:128.00px;top:710.63px;font-size:17.8px;color:#7b8087;-webkit-text-stroke:0.5px currentColor">Common</div>
<div class="t med" style="left:128.00px;top:737.23px;font-size:17.8px;color:#7b8087;-webkit-text-stroke:0.5px currentColor">labels:</div>
<div class="a" style="left:250px;top:706.2px;width:75.3px;height:26.6px;background:#202226"></div>
<div class="t  m" style="left:253.00px;top:712.85px;font-size:16.5px;color:#7b8087;">default</div>
<div class="a" style="left:331px;top:706.2px;width:105.0px;height:26.6px;background:#202226"></div>
<div class="t  m" style="left:334.00px;top:712.85px;font-size:16.5px;color:#7b8087;">75547bdf86</div>
<div class="a" style="left:442px;top:706.2px;width:306.0px;height:26.6px;background:#202226"></div>
<div class="t  m" style="left:445.00px;top:712.85px;font-size:16.5px;color:#7b8087;">uzigood-statement-uzigood-sta…</div>
<div class="a" style="left:754px;top:706.2px;width:174.3px;height:26.6px;background:#202226"></div>
<div class="t  m" style="left:757.00px;top:712.85px;font-size:16.5px;color:#7b8087;">uzigood-statement</div>
<div class="a" style="left:934px;top:706.2px;width:305.5px;height:26.6px;background:#202226"></div>
<div class="t  m" style="left:937.00px;top:712.85px;font-size:16.5px;color:#7b8087;">default/uzigood-statement-uzi…</div>
<div class="a" style="left:250px;top:735.4px;width:154.5px;height:26.6px;background:#202226"></div>
<div class="t  m" style="left:253.00px;top:742.05px;font-size:16.5px;color:#7b8087;">/mnt/test/*.log</div>
<div class="a" style="left:410px;top:735.4px;width:174.3px;height:26.6px;background:#202226"></div>
<div class="t  m" style="left:413.00px;top:742.05px;font-size:16.5px;color:#7b8087;">uzigood-statement</div>
<div class="t med" style="left:1398.20px;top:711.22px;font-size:18.4px;color:#7b8087;-webkit-text-stroke:0.5px currentColor">Limit:</div>
<div class="t  m" style="left:1456.00px;top:712.08px;font-size:19.2px;color:#7b8087;">1000 (8</div>
<div class="t  m" style="left:1456.00px;top:743.08px;font-size:19.2px;color:#7b8087;">returned)</div>
<div class="t med" style="left:1636.00px;top:711.56px;font-size:18px;color:#7b8087;-webkit-text-stroke:0.5px currentColor">Total bytes</div>
<div class="t med" style="left:1636.00px;top:739.05px;font-size:17.9px;color:#7b8087;-webkit-text-stroke:0.5px currentColor">processed:</div>
<div class="t  m" style="left:1798.50px;top:712.08px;font-size:19.2px;color:#7b8087;">41</div>
<div class="t  m" style="left:1798.50px;top:743.08px;font-size:19.2px;color:#7b8087;">kB</div>
<div class="a" style="left:128px;top:793px;width:4px;height:130px;background:#e24d42"></div>
<svg style="left:0;top:0" width="300" height="915"><path d="M146.6,801 L151.4,805.4 L146.6,809.8" fill="none" stroke="#c7d0d9" stroke-width="2.3" stroke-linecap="round" stroke-linejoin="round"/></svg>
<div class="t  m" style="left:162.70px;top:798.60px;font-size:16.5px;color:#c7d0d9;">2021-05-11 20:25:50</div>
<div class="t  m" style="left:362.80px;top:798.60px;font-size:16.5px;color:#c7d0d9;">2021-05-11 20:25:50.322 [main] ERROR org.springframework.boot.SpringApplication - Application run failed</div>
<div class="t  m" style="left:362.80px;top:825.68px;font-size:16.5px;color:#c7d0d9;">org.springframework.context.ApplicationContextException: Failed to start bean 'webServerStartStop'; nested exception is java.lang.reflect.UndeclaredThr</div>
<div class="t  m" style="left:362.80px;top:852.76px;font-size:16.5px;color:#c7d0d9;">owableException</div>
<div class="t  m" style="left:362.80px;top:879.84px;font-size:16.5px;color:#c7d0d9;">        at org.springframework.context.support.DefaultLifecycleProcessor.doStart(DefaultLifecycleProcessor.java:185)</div>
<div class="t  m" style="left:362.80px;top:906.92px;font-size:16.5px;color:#c7d0d9;">        at org.springframework.context.support.DefaultLifecycleProcessor.access$200(DefaultLifecycleProcessor.java:53)</div>
<div class="a" style="left:221px;top:914px;width:65px;height:1px;background:#a65e1f"></div>
<div class="a" style="left:288px;top:914px;width:65px;height:1px;background:#5a5c60"></div></body></html>
